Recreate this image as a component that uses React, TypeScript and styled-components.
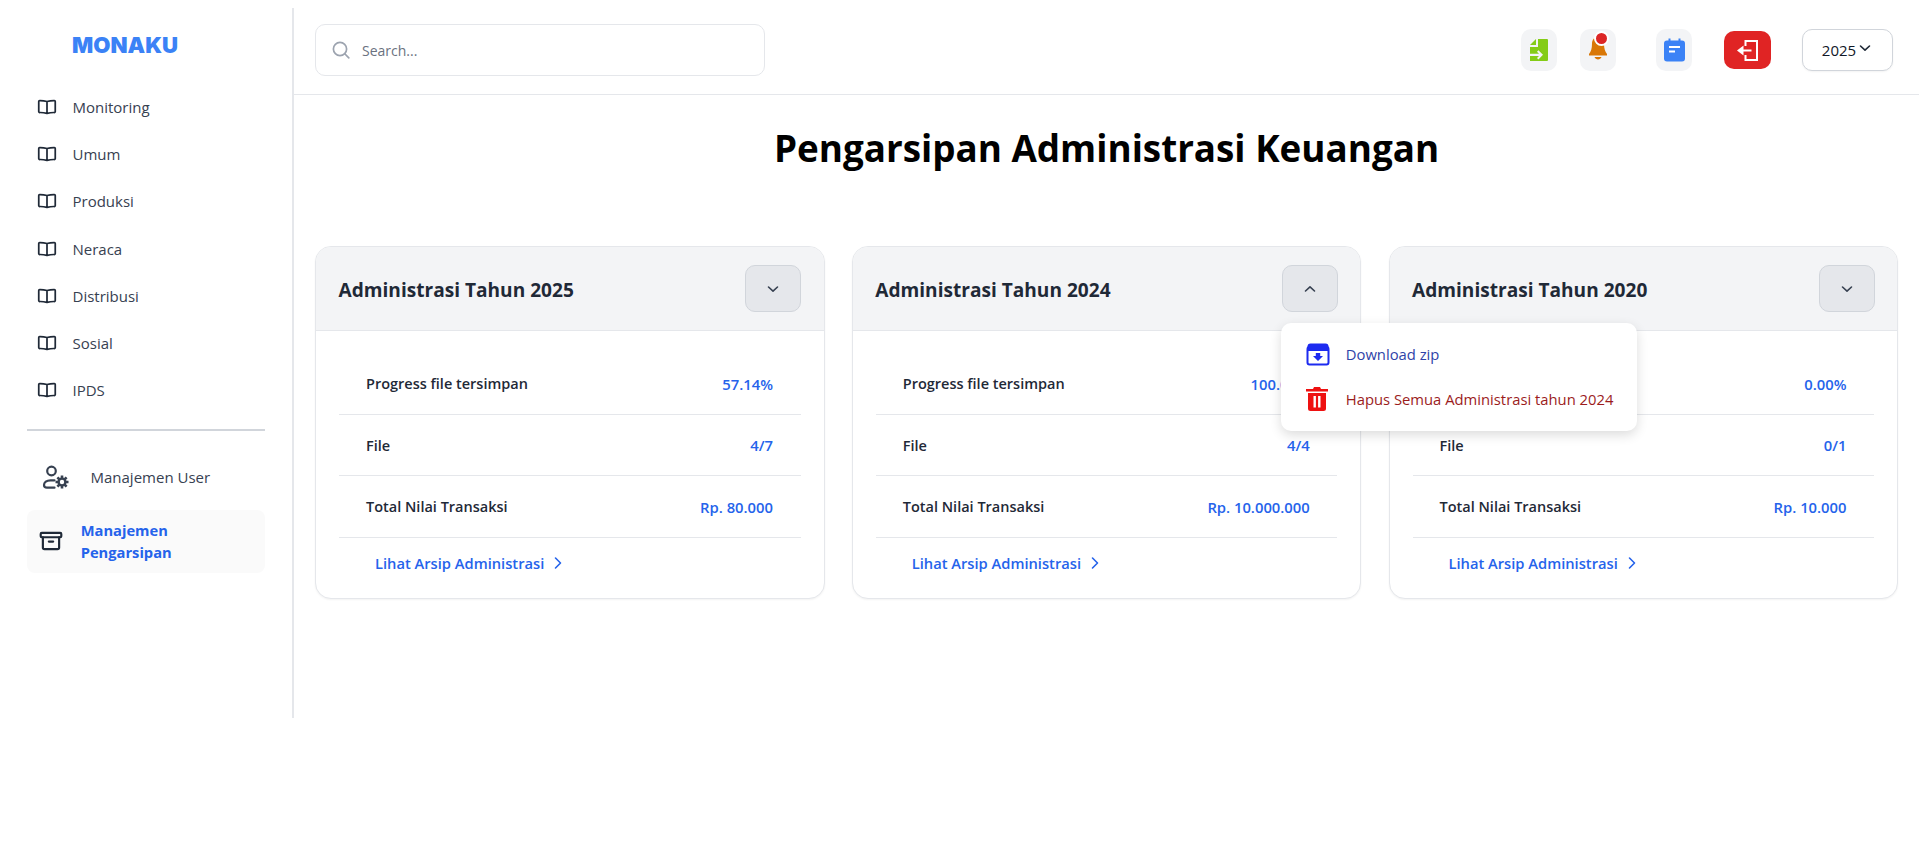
import React from "react";
import styled, { createGlobalStyle } from "styled-components";

const Global = createGlobalStyle`
  html, body { margin: 0; padding: 0; background: #fff; }
  body { font-family: "Open Sans", "Noto Sans", "Liberation Sans", sans-serif; color: #111827; }
  * { box-sizing: border-box; }
`;

const Shell = styled.div`
  display: flex;
  width: 1919px;
  height: 864px;
  overflow: hidden;
`;
const Sidebar = styled.aside`
  width: 294px;
  height: 710px;
  margin-top: 8px;
  flex: none;
  border-right: 2px solid #e5e7eb;
  padding: 24px 27px 0 27px;
  display: flex;
  flex-direction: column;
`;
const Logo = styled.div`
  margin-left: 45px;
  height: 26px;
  font: 900 22.2px/26px "Inter", "Liberation Sans", sans-serif;
  color: #3b82f6;
`;
const NavList = styled.nav`
  margin-top: 25.5px;
  display: flex;
  flex-direction: column;
`;
const NavItem = styled.a`
  height: 47.2px;
  display: flex;
  align-items: center;
  gap: 14.5px;
  padding-left: 9px;
  font-size: 15px;
  color: #374151;
`;
const Divider = styled.hr`
  margin: 15.5px 0 0;
  border: 0;
  height: 2px;
  background: #d1d5db;
  width: 238px;
`;
const UserItem = styled.a`
  margin-top: 22.5px;
  height: 46px;
  display: flex;
  align-items: center;
  gap: 18.5px;
  padding-left: 15px;
  font-size: 15px;
  color: #374151;
`;
const ActiveItem = styled.a`
  margin-top: 10px;
  width: 238px;
  height: 63px;
  flex: none;
  border-radius: 8px;
  background: #fafafa;
  display: flex;
  align-items: center;
  gap: 16.3px;
  padding-left: 11.4px;
  font-size: 14.7px;
  font-weight: 700;
  line-height: 22px;
  color: #2563eb;
`;
const Main = styled.main`
  flex: 1;
  min-width: 0;
  display: flex;
  flex-direction: column;
`;
const Header = styled.header`
  height: 95px;
  flex: none;
  border-bottom: 1.5px solid #e5e7eb;
  padding: 24px 26px 0 21px;
  display: flex;
  align-items: flex-start;
`;
const SearchBox = styled.div`
  width: 450px;
  height: 52px;
  border: 1.5px solid #e5e7eb;
  border-radius: 10px;
  display: flex;
  align-items: center;
  gap: 12px;
  padding-left: 16px;
  font-size: 14px;
  color: #6b7280;
`;
const Actions = styled.div`
  margin-left: auto;
  display: flex;
  align-items: center;
  height: 42px;
  margin-top: 5px;
`;
const IconTile = styled.button<{ $ml: number }>`
  position: relative;
  width: 36px;
  height: 42px;
  margin-left: ${(p) => p.$ml}px;
  border: 0;
  padding: 0;
  border-radius: 10px;
  background: #f3f4f6;
  display: flex;
  align-items: center;
  justify-content: center;
`;
const Dot = styled.span`
  position: absolute;
  top: 2px;
  right: 7px;
  width: 15px;
  height: 15px;
  border-radius: 50%;
  background: #dc2626;
  border: 2.5px solid #fff;
`;
const LogoutButton = styled.button`
  width: 47px;
  height: 38px;
  margin-left: 32px;
  border: 0;
  padding: 0;
  border-radius: 10px;
  background: #e02424;
  display: flex;
  align-items: center;
  justify-content: center;
`;
const YearButton = styled.button`
  width: 91px;
  height: 42px;
  margin-left: 31px;
  border: 1.5px solid #d1d5db;
  border-radius: 10px;
  background: #fff;
  display: flex;
  align-items: center;
  justify-content: center;
  gap: 1px;
  font: 500 15px "Open Sans", sans-serif;
  color: #111827;
  box-shadow: 0 1px 2px rgba(0, 0, 0, 0.05);
`;
const YearChevron = styled.span`
  display: flex;
  margin-bottom: 5px;
`;
const Title = styled.h1`
  margin: 28px 0 0;
  height: 50px;
  text-align: center;
  font-size: 36.8px;
  line-height: 50px;
  font-weight: 700;
  color: #000;
`;
const Cards = styled.section`
  margin-top: 73px;
  padding: 0 21px;
  display: grid;
  grid-template-columns: repeat(3, 509.5px);
  justify-content: space-between;
`;
const Card = styled.article`
  position: relative;
  height: 353px;
  border: 1.5px solid #e5e7eb;
  border-radius: 16px;
  background: #fff;
  box-shadow: 0 1px 2px rgba(0, 0, 0, 0.05);
`;
const CardHead = styled.div`
  height: 84px;
  padding: 0 22.5px 0 22.5px;
  display: flex;
  align-items: center;
  justify-content: space-between;
  background: #f3f4f6;
  border-bottom: 1.5px solid #e5e7eb;
  border-radius: 15px 15px 0 0;
`;
const CardTitle = styled.h2`
  margin: 2px 0 0;
  font-size: 19.1px;
  font-weight: 700;
  color: #1f2937;
`;
const ToggleButton = styled.button`
  width: 56px;
  height: 47px;
  border: 1.5px solid #d1d5db;
  border-radius: 10px;
  background: #e5e7eb;
  display: flex;
  align-items: center;
  justify-content: center;
  padding: 0;
`;
const CardBody = styled.div`
  padding: 22px 23px 0 23px;
`;
const Row = styled.div<{ $h: number }>`
  height: ${(p) => p.$h}px;
  display: flex;
  align-items: center;
  justify-content: space-between;
  padding: 0 27.5px 0 27px;
  border-bottom: 1.5px solid #e5e7eb;
  font-size: 14.5px;
`;
const RowLabel = styled.span`
  font-weight: 600;
  color: #1f2937;
`;
const RowValue = styled.span`
  font-size: 14.8px;
  font-weight: 600;
  color: #2563eb;
`;
const MoreLink = styled.a`
  margin-left: 36px;
  height: 50px;
  display: flex;
  align-items: center;
  gap: 9px;
  font-size: 14.7px;
  font-weight: 600;
  color: #2563eb;
`;
const Menu = styled.div`
  position: absolute;
  top: 76px;
  left: 428px;
  z-index: 5;
  width: 356px;
  height: 108px;
  padding: 8px 0 0 25px;
  background: #fff;
  border-radius: 10px;
  box-shadow: 0 4px 12px rgba(0, 0, 0, 0.14);
`;
const MenuItem = styled.a<{ $c: string }>`
  height: 45px;
  display: flex;
  align-items: center;
  font-size: 14.8px;
  color: ${(p) => p.$c};
`;
const MenuIcon = styled.span`
  width: 40px;
  display: flex;
  flex: none;
`;

const Book = () => (
  <svg width="22" height="22" viewBox="0 0 24 24" fill="none" stroke="#1f2937" strokeWidth="1.900" strokeLinecap="round" strokeLinejoin="round">
    <path d="M12 6.030v13m0-13c-2.819-.831-4.715-1.076-8.029-1.023A.99.99 0 0 0 3 6v11c0 .563.466 1.014 1.030 1.007 3.122-.043 5.018.212 7.970 1.023m0-13c2.819-.831 4.715-1.076 8.029-1.023A.99.99 0 0 1 21 6v11c0 .563-.466 1.014-1.030 1.007-3.122-.043-5.018.212-7.970 1.023" />
  </svg>
);
const UserCog = () => (
  <svg width="30" height="30" viewBox="0 0 30 30" fill="none" stroke="#374151" strokeWidth="2.200" strokeLinecap="round">
    <circle cx="9.500" cy="9" r="4.300" />
    <path d="M12.500 18.300H8.500C4.500 18.300 2 20.500 2 23c0 2 1 2.700 3 2.700h7.500" />
    <circle cx="20" cy="20" r="3.400" strokeWidth="2.400" />
    <path strokeLinecap="butt" strokeWidth="2.600" d="M20 13.500v3M20 23.500v3M13.500 20h3M23.500 20h3M15.400 15.400l2.100 2.100M22.500 22.500l2.100 2.100M15.400 24.600l2.100-2.100M22.500 17.500l2.100-2.100" />
  </svg>
);
const Archive = () => (
  <svg width="26" height="26" viewBox="0 0 24 24" fill="none" stroke="#1f2937" strokeWidth="2" strokeLinecap="round" strokeLinejoin="round">
    <rect x="2.500" y="4.500" width="19" height="4" rx="1" />
    <path d="M4.500 8.500V18a1.500 1.500 0 0 0 1.500 1.500h12a1.500 1.500 0 0 0 1.500-1.500V8.500M10 12.500h4" />
  </svg>
);
const Magnifier = () => (
  <svg width="18" height="18" viewBox="0 0 18 18" fill="none" stroke="#9ca3af" strokeWidth="1.700" strokeLinecap="round">
    <circle cx="8" cy="8" r="6.600" />
    <path d="M13 13l3.800 3.800" />
  </svg>
);
const FileIn = () => (
  <svg width="20" height="24" viewBox="0 0 20 24">
    <path d="M1 7l6-6v6z" fill="#84cc16" />
    <path d="M9 1h9a1 1 0 0 1 1 1v20a1 1 0 0 1-1 1H1v-5h9l-2 2 1.400 1.400L14 16.800l-4.600-4.500L8 13.700l2 2H1V9h8z" fill="#84cc16" />
  </svg>
);
const Bell = () => (
  <svg width="20" height="26" viewBox="0 0 20 26" fill="#d97706">
    <path d="M10 0c-3.500 0-6 2.800-6 6.500 0 5-1 8-3 10.500v1.500h18V17c-2-2.500-3-5.500-3-10.500C16 2.800 13.500 0 10 0z" />
    <path d="M6.500 20h7c-.5 1.500-2 2.500-3.500 2.500S7 21.500 6.500 20z" />
  </svg>
);
const Notes = () => (
  <svg width="21" height="24" viewBox="0 0 21 24">
    <rect x="0" y="2.500" width="21" height="21" rx="3" fill="#3b82f6" />
    <path d="M5.500 0.500v4M15.500 0.500v4" stroke="#3b82f6" strokeWidth="2" />
    <path d="M5 9h11M5 13.500h6" stroke="#fff" strokeWidth="2" />
  </svg>
);
const Logout = () => (
  <svg width="21" height="21" viewBox="0 0 21 21" fill="none" stroke="#fff" strokeWidth="2">
    <path d="M8.500 6V1h11.500v19H8.500v-5" />
    <path d="M6 10.500h8.500" />
    <path d="M0 10.500L6.500 5.500v10z" fill="#fff" stroke="none" />
  </svg>
);
const Chevron = ({ up, color = "#374151", size = 16 }: { up?: boolean; color?: string; size?: number }) => (
  <svg width={size} height={size} viewBox="0 0 16 16" fill="none" stroke={color} strokeWidth="1.600" strokeLinecap="round" strokeLinejoin="round">
    <path d={up ? "M3.500 10L8 5.800l4.500 4.200" : "M3.500 6L8 10.200 12.500 6"} />
  </svg>
);
const ChevronRight = () => (
  <svg width="10" height="14" viewBox="0 0 10 14" fill="none" stroke="#2563eb" strokeWidth="1.600" strokeLinecap="round" strokeLinejoin="round">
    <path d="M2.500 2l5 5-5 5" />
  </svg>
);
const BoxDown = () => (
  <svg width="24" height="24" viewBox="0 0 24 24" fill="none">
    <path d="M1.500 9V4.500a3 3 0 0 1 3-3h15a3 3 0 0 1 3 3V9z" fill="#1d2bf0" />
    <rect x="1.500" y="5" width="21" height="17.500" rx="2" stroke="#1d2bf0" strokeWidth="2" />
    <path d="M9.800 11h4.400v3H17l-5 5-5-5h2.800z" fill="#1d2bf0" />
  </svg>
);
const Trash = () => (
  <svg width="22" height="24" viewBox="0 0 22 24" fill="#ee1111">
    <path d="M8 0h6l1 2h7v2.400H0V2h7z" />
    <path d="M2 6h18v15.500a2.500 2.500 0 0 1-2.500 2.500h-13A2.500 2.500 0 0 1 2 21.500zm5.500 3v11.500h2.400V9zm4.600 0v11.500h2.400V9z" fillRule="evenodd" />
  </svg>
);

const navItems = ["Monitoring", "Umum", "Produksi", "Neraca", "Distribusi", "Sosial", "IPDS"];
const cards = [
  { year: "2025", pct: "57.14%", file: "4/7", total: "Rp. 80.000", open: false },
  { year: "2024", pct: "100.00%", file: "4/4", total: "Rp. 10.000.000", open: true },
  { year: "2020", pct: "0.00%", file: "0/1", total: "Rp. 10.000", open: false },
];

export default function App() {
  return (
    <>
      <Global />
      <Shell>
        <Sidebar>
          <Logo>MONAKU</Logo>
          <NavList>
            {navItems.map((n) => (
              <NavItem key={n}>
                <Book />
                {n}
              </NavItem>
            ))}
          </NavList>
          <Divider />
          <UserItem>
            <UserCog />
            Manajemen User
          </UserItem>
          <ActiveItem>
            <Archive />
            <span>
              Manajemen
              <br />
              Pengarsipan
            </span>
          </ActiveItem>
        </Sidebar>
        <Main>
          <Header>
            <SearchBox>
              <Magnifier />
              Search...
            </SearchBox>
            <Actions>
              <IconTile $ml={0}>
                <FileIn />
              </IconTile>
              <IconTile $ml={23}>
                <Bell />
                <Dot />
              </IconTile>
              <IconTile $ml={40}>
                <Notes />
              </IconTile>
              <LogoutButton>
                <Logout />
              </LogoutButton>
              <YearButton>
                2025
                <YearChevron>
                  <Chevron color="#1f2937" />
                </YearChevron>
              </YearButton>
            </Actions>
          </Header>
          <Title>Pengarsipan Administrasi Keuangan</Title>
          <Cards>
            {cards.map((c) => (
              <Card key={c.year}>
                <CardHead>
                  <CardTitle>Administrasi Tahun {c.year}</CardTitle>
                  <ToggleButton>
                    <Chevron up={c.open} />
                  </ToggleButton>
                </CardHead>
                <CardBody>
                  <Row $h={62}>
                    <RowLabel>Progress file tersimpan</RowLabel>
                    <RowValue>{c.pct}</RowValue>
                  </Row>
                  <Row $h={61}>
                    <RowLabel>File</RowLabel>
                    <RowValue>{c.file}</RowValue>
                  </Row>
                  <Row $h={62}>
                    <RowLabel>Total Nilai Transaksi</RowLabel>
                    <RowValue>{c.total}</RowValue>
                  </Row>
                  <MoreLink>
                    Lihat Arsip Administrasi
                    <ChevronRight />
                  </MoreLink>
                </CardBody>
                {c.open && (
                  <Menu>
                    <MenuItem $c="#2f43a8">
                      <MenuIcon>
                        <BoxDown />
                      </MenuIcon>
                      Download zip
                    </MenuItem>
                    <MenuItem $c="#9b1c1c">
                      <MenuIcon>
                        <Trash />
                      </MenuIcon>
                      Hapus Semua Administrasi tahun 2024
                    </MenuItem>
                  </Menu>
                )}
              </Card>
            ))}
          </Cards>
        </Main>
      </Shell>
    </>
  );
}
